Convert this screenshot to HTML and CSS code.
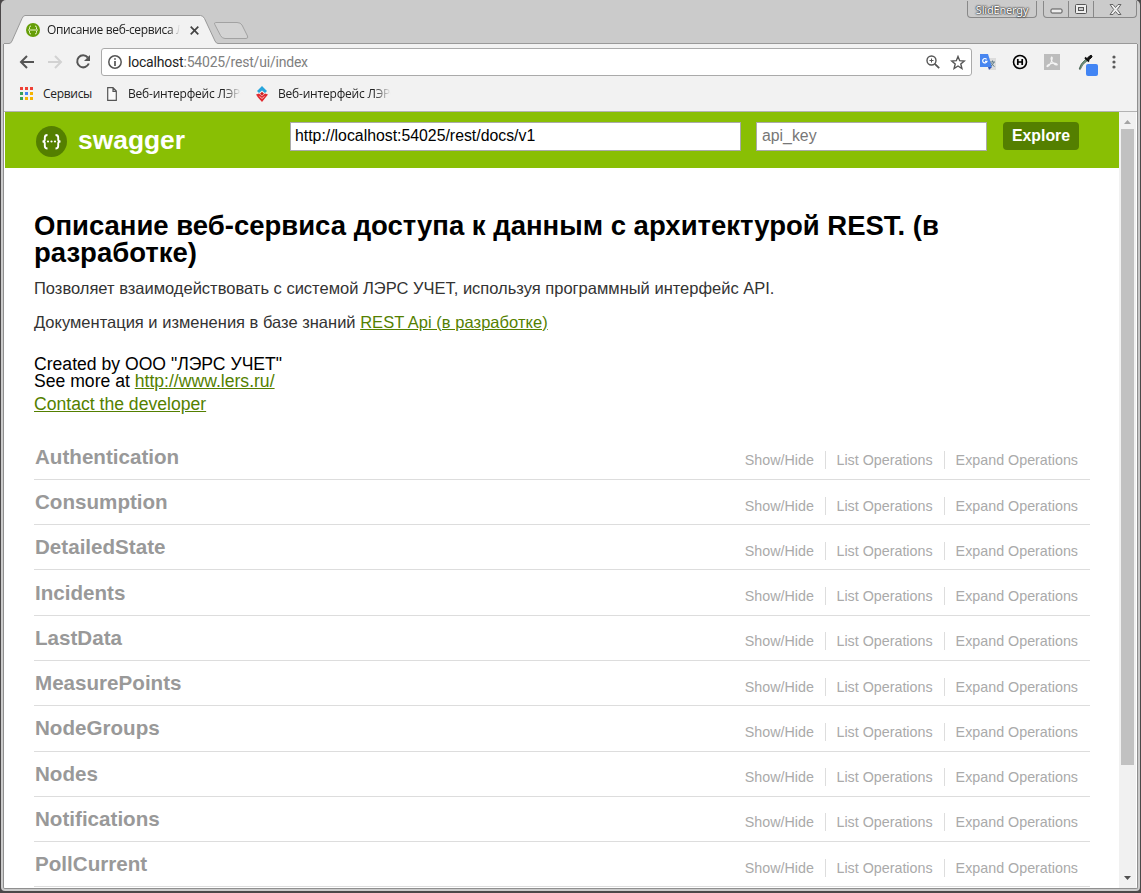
FILE: index.html
```html
<!DOCTYPE html>
<html lang="ru">
<head>
<meta charset="utf-8">
<title>Описание веб-сервиса</title>
<link rel="stylesheet" href="styles.css">
</head>
<body>
<div class="window">
  <header class="titlebar">
    <svg class="tab-shape" width="260" height="32" viewBox="0 0 260 32">
      <path d="M0 32V29.500H5Q7 29.500 8 27L18 4.500Q19.300 1.500 21 1.500H196.500Q199 1.500 200.500 4.500L211 27Q212.300 29.500 214 29.500H260V32Z" fill="#f2f2f2"/>
      <path d="M0 29.500H5Q7 29.500 8 27L18 4.500Q19.300 1.500 21 1.500H196.500Q199 1.500 200.500 4.500L211 27Q212.300 29.500 214 29.500H260" fill="none" stroke="#999"/>
      <path d="M211.500 8.500H233Q236.500 8.500 238 11L243.500 22Q244.500 24.500 242 24.500H221Q218 24.500 216.500 21.500L210.800 10.500Q210 8.500 211.500 8.500Z" fill="#d3d3d3" stroke="#a2a2a2"/>
    </svg>
    <div class="tab">
      <svg width="14" height="14" viewBox="0 0 14 14"><circle cx="7" cy="7" r="7" fill="#659e08"/><path d="M5 3Q3.500 3 3.500 4.500V6L2.500 7L3.500 8V9.500Q3.500 11 5 11M9 3Q10.500 3 10.500 4.500V6L11.500 7L10.500 8V9.500Q10.500 11 9 11M4 7H10" stroke="#e9f5c8" fill="none"/></svg>
      <span class="tab-title">Описание веб-сервиса ЛЭ</span>
      <svg width="9" height="9" viewBox="0 0 9 9"><path d="M.7.700L8.300 8.300M8.300.700L.7 8.300" stroke="#444" stroke-width="1.700"/></svg>
    </div>
    <div class="user">SlidEnergy</div>
    <div class="controls">
      <span class="control"><svg width="13" height="6"><rect x="1" y="1" width="11" height="4" rx="1" fill="#eee" stroke="#555"/></svg></span>
      <span class="control"><svg width="12" height="10"><rect x=".5" y=".5" width="11" height="9" rx="1" fill="#eee" stroke="#555"/><rect x="3.500" y="3.500" width="5" height="3" fill="#ccc" stroke="#555"/></svg></span>
      <span class="control wide"><svg width="13" height="11" viewBox="0 0 13 11"><path d="M1 .5H4L6.500 3.500L9 .5H12L8.300 5.500L12 10.500H9L6.500 7.500L4 10.500H1L4.700 5.500Z" fill="#eee" stroke="#666"/></svg></span>
    </div>
  </header>
  <div class="frame">
  <div class="toolbar">
    <svg class="nav" width="16" height="14" viewBox="0 0 16 14"><path d="M15 7H2M8 1L2 7L8 13" fill="none" stroke="#555" stroke-width="2"/></svg>
    <svg class="nav" width="16" height="14" viewBox="0 0 16 14"><path d="M1 7H14M8 1L14 7L8 13" fill="none" stroke="#d2d2d2" stroke-width="2"/></svg>
    <svg class="nav" width="16" height="16" viewBox="0 0 16 16"><path d="M12.800 3.500A6 6 0 1 0 13.800 9.500" fill="none" stroke="#555" stroke-width="2"/><path d="M15 1V7H9Z" fill="#555"/></svg>
    <div class="omnibox">
      <svg width="14" height="14" viewBox="0 0 14 14"><circle cx="7" cy="7" r="6.200" fill="none" stroke="#555" stroke-width="1.500"/><path d="M7 6V11M7 3.200V4.800" stroke="#555" stroke-width="1.700"/></svg>
      <span class="url"><b>localhost</b>:54025/rest/ui/index</span>
      <svg width="14" height="14" viewBox="0 0 14 14"><circle cx="5.500" cy="5.500" r="4.500" fill="none" stroke="#555" stroke-width="1.400"/><path d="M8.800 8.800L13.200 13.200" stroke="#555" stroke-width="1.800"/><path d="M3.500 5.500H7.500M5.500 3.500V7.500" stroke="#555"/></svg>
      <svg class="star" width="16" height="15" viewBox="0 0 16 15"><path d="M8 1.500L9.700 5.700L14.300 6L10.800 9L11.900 13.500L8 11L4.100 13.500L5.200 9L1.700 6L6.300 5.700Z" fill="none" stroke="#555" stroke-width="1.400"/></svg>
    </div>
    <div class="extensions">
      <svg width="16" height="16" viewBox="0 0 16 16"><path d="M6 4H16V16H10Z" fill="#dcdcdc"/><path d="M0 0H8L12 13H0Z" fill="#4886f0"/><path d="M8 13H12L9 16Z" fill="#3457b4"/><path d="M6.600 5.300A2.200 2.200 0 1 0 7 7.300H5" fill="none" stroke="#fff" stroke-width="1.200"/><path d="M10 8H15M12.500 6.500V8M14 8Q13 11 10.800 12M11.500 9Q12 11 14.500 12.500" stroke="#607d8b" fill="none"/></svg>
      <svg width="16" height="16" viewBox="0 0 16 16"><circle cx="8" cy="8" r="6.500" fill="none" stroke="#000" stroke-width="1.600"/><path d="M5.800 5V11M10.200 5V11M5.800 8H10.200" stroke="#000" stroke-width="1.700"/></svg>
      <svg width="16" height="16" viewBox="0 0 16 16"><path d="M0 0H16V16H0Z" fill="#bdbdbd"/><path d="M7.500 3C9 3 8 6 7 8.500C6 11 4 13 3 12.500C2.500 11 6 9.500 9 9.200C12 9 14 10 13 11C11.500 11.500 7 8 7 4.500Z" fill="none" stroke="#f4f4f4" stroke-width="1.100"/></svg>
      <svg width="21" height="22" viewBox="0 0 21 22"><path d="M1.200 15Q2 10 8 5L9.500 6.500Q4 10 2.200 15.500Z" fill="#6f9c80" stroke="#354a40" stroke-width=".7"/><path d="M7 3.500L11 7.500" stroke="#111" stroke-width="1.800"/><path d="M9 4.500L11.500 2Q13.500.5 14 2Q14.300 3 13 4L10.500 6Z" fill="#111" stroke="#111"/><rect x="8" y="10" width="12" height="12" rx="2" fill="#4285f4"/></svg>
      <svg width="4" height="14" viewBox="0 0 4 14"><g fill="#5a5a5a"><circle cx="2" cy="2" r="1.600"/><circle cx="2" cy="7" r="1.600"/><circle cx="2" cy="12" r="1.600"/></g></svg>
    </div>
  </div>
  <div class="bookmarks">
    <svg width="13" height="13" viewBox="0 0 13 13"><path d="M0 0h3v3H0zM5 0h3v3H5zM10 0h3v3h-3z" fill="#ef4136"/><path d="M0 5h3v3H0zM0 10h3v3H0z" fill="#38a05a"/><path d="M5 5h3v3H5z" fill="#4285f4"/><path d="M10 5h3v3h-3zM5 10h3v3H5zM10 10h3v3h-3z" fill="#f5b400"/></svg>
    <span class="apps">Сервисы</span>
    <svg width="10" height="14" viewBox="0 0 10 14"><path d="M.7.700H6L9.300 4V13.300H.7ZM6 .7V4.300H9.300" fill="#fafafa" stroke="#555" stroke-width="1.200"/></svg>
    <span class="bookmark">Веб-интерфейс ЛЭРС</span>
    <svg class="lers" width="12" height="16" viewBox="0 0 12 16"><path d="M6 0L11 5L9 7L6 4.500L3 7L1 5Z" fill="#27a5dc"/><path d="M0 8.500L3 7.500L6 10L9 7.500L12 8.500L10 11L6 16L2 11.500Z" fill="#e12c32"/><path d="M6 5.800L8 7.700L6 9.500L4 7.700Z" fill="#c22"/><path d="M3.500 10.500L6 12.500L8.500 10.500" stroke="#f6b5b5" fill="none"/></svg>
    <span class="bookmark">Веб-интерфейс ЛЭРС</span>
  </div>
  <div class="viewport">
    <div class="page">
      <div class="swagger-header">
        <svg class="logo" width="31" height="31" viewBox="0 0 31 31"><circle cx="15.500" cy="15.500" r="15.500" fill="#547f00"/><path d="M11.500 9Q8.800 9 8.800 11.500V13.500Q8.800 15.500 6.500 15.500Q8.800 15.500 8.800 17.500V20Q8.800 22.500 11.500 22.500M19.500 9Q22.200 9 22.200 11.500V13.500Q22.200 15.500 24.500 15.500Q22.200 15.500 22.200 17.500V20Q22.200 22.500 19.500 22.500" stroke="#fff" stroke-width="1.900" fill="none"/><g fill="#fff"><circle cx="12" cy="15.500" r="1.100"/><circle cx="15.500" cy="15.500" r="1.100"/><circle cx="19" cy="15.500" r="1.100"/></g></svg>
        <span class="brand">swagger</span>
        <div class="field field-url">http://localhost:54025/rest/docs/v1</div>
        <div class="field field-key">api_key</div>
        <div class="explore">Explore</div>
      </div>
      <main class="content">
        <h1>Описание веб-сервиса доступа к данным с архитектурой REST. (в разработке)</h1>
        <p class="description">Позволяет взаимодействовать с системой ЛЭРС УЧЕТ, используя программный интерфейс API.</p>
        <p class="description">Документация и изменения в базе знаний <a>REST Api (в разработке)</a></p>
        <div class="info">
          <div>Created by ООО "ЛЭРС УЧЕТ"</div>
          <div>See more at <a>http://www.lers.ru/</a></div>
          <div class="contact"><a>Contact the developer</a></div>
        </div>
        <ul class="resources">
          <li><h2>Authentication</h2><div class="ops"><span>Show/Hide</span><span>List Operations</span><span>Expand Operations</span></div></li>
          <li><h2>Consumption</h2><div class="ops"><span>Show/Hide</span><span>List Operations</span><span>Expand Operations</span></div></li>
          <li><h2>DetailedState</h2><div class="ops"><span>Show/Hide</span><span>List Operations</span><span>Expand Operations</span></div></li>
          <li><h2>Incidents</h2><div class="ops"><span>Show/Hide</span><span>List Operations</span><span>Expand Operations</span></div></li>
          <li><h2>LastData</h2><div class="ops"><span>Show/Hide</span><span>List Operations</span><span>Expand Operations</span></div></li>
          <li><h2>MeasurePoints</h2><div class="ops"><span>Show/Hide</span><span>List Operations</span><span>Expand Operations</span></div></li>
          <li><h2>NodeGroups</h2><div class="ops"><span>Show/Hide</span><span>List Operations</span><span>Expand Operations</span></div></li>
          <li><h2>Nodes</h2><div class="ops"><span>Show/Hide</span><span>List Operations</span><span>Expand Operations</span></div></li>
          <li><h2>Notifications</h2><div class="ops"><span>Show/Hide</span><span>List Operations</span><span>Expand Operations</span></div></li>
          <li><h2>PollCurrent</h2><div class="ops"><span>Show/Hide</span><span>List Operations</span><span>Expand Operations</span></div></li>
        </ul>
      </main>
    </div>
    <div class="scrollbar">
      <svg width="7" height="4"><path d="M0 4L3.500 0L7 4Z" fill="#a3a3a3"/></svg>
      <div class="thumb"></div>
      <svg width="7" height="4"><path d="M0 0H7L3.500 4Z" fill="#505050"/></svg>
    </div>
  </div>
  </div>
</div>
</body>
</html>
```
FILE: styles.css
```css
* { box-sizing: border-box; }
body { margin: 0; background: #4b4849; font-family: "Liberation Sans", Arial, sans-serif; }
svg { display: block; flex: none; }
.window {
  width: 1139px; height: 891px; margin: 0 0 0 1px;
  padding: 1px 2px 2px 2px; overflow: hidden;
  background: #cbcbcb; border-radius: 5px 5px 4px 4px;
  display: flex; flex-direction: column;
}
.titlebar { height: 43px; flex: none; margin: 0 1px; display: flex; align-items: flex-start; position: relative; }
.tab-shape { position: absolute; left: 0; top: 13px; }
.titlebar::after { content: ""; position: absolute; left: 259px; right: 0; bottom: 0; height: 1px; background: #999; }
.tab { position: relative; display: flex; align-items: center; width: 196px; padding-left: 22px; margin-top: 19px; height: 20px; }
.tab-title {
  font: 12px/20px "Open Sans", sans-serif; color: #222; width: 133px; margin: 0 10px 0 7px; flex: none;
  overflow: hidden; white-space: nowrap; letter-spacing: -.35px;
  mask-image: linear-gradient(90deg, #000 92%, transparent);
}
.user {
  margin-left: auto; width: 70px; height: 17px; border: 1px solid #888; border-top: 0; border-radius: 0 0 4px 4px;
  font: 11px/17px "Noto Sans", sans-serif; letter-spacing: -.2px; color: #fff; text-align: center; text-shadow: 0 0 2px #333, 0 0 2px #333, 0 0 1px #333;
}
.controls { display: flex; margin: 0 0 0 6px; height: 17px; border: 1px solid #888; border-top: 0; border-radius: 0 0 4px 4px; }
.control { width: 25px; display: flex; align-items: center; justify-content: center; border-right: 1px solid #888; }
.control:first-child { align-items: flex-end; padding-bottom: 3px; }
.wide { width: 42px; border: 0; }
.frame { flex: 1; min-height: 0; display: flex; flex-direction: column; border: 1px solid #8f8f8f; border-top: 0; overflow: hidden; border-radius: 0 0 2px 2px; }
.toolbar { height: 36px; flex: none; background: #f2f2f2; display: flex; align-items: center; padding-left: 15px; }
.nav { margin-right: 12px; }
.omnibox {
  width: 871px; height: 28px; flex: none; margin-left: -2px; border: 1px solid #aaa; border-radius: 3px; background: #fff;
  display: flex; align-items: center; padding: 0 5px 0 6px;
}
.url { font: 14px/26px Roboto, sans-serif; letter-spacing: -.2px; color: #808080; margin: 0 auto 0 6px; }
.url b { font-weight: 400; color: #222; }
.star { margin-left: 10px; }
.extensions { display: flex; align-items: center; gap: 16px; margin-left: 8px; }
.extensions svg:nth-child(4) { margin: 6px -3px 0 2px; }
.bookmarks { height: 32px; flex: none; background: #f2f2f2; border-bottom: 1px solid #b3b3b3; display: flex; align-items: center; padding: 0 0 4px 16px; font: 12px/18px "Open Sans", sans-serif; color: #222; }
.apps { width: 49px; margin: 0 15px 0 10px; letter-spacing: -.3px; }
.bookmark { width: 113px; margin-left: 11px; overflow: hidden; white-space: nowrap; letter-spacing: -.2px; mask-image: linear-gradient(90deg, #000 85%, transparent); }
.lers { margin-left: 15px; margin-right: -1px; }
.viewport { flex: 1; min-height: 0; display: flex; background: #fff; overflow: hidden; padding-left: 1px; }
.page { width: 1114px; flex: none; overflow: hidden; }
.swagger-header { height: 56px; background: #89bf04; display: flex; align-items: flex-start; padding: 10px 0 0 31px; }
.logo { margin-top: 4px; }
.brand { font-size: 26.4px; line-height: 30px; font-weight: 700; color: #fff; margin: 3px 0 0 11px; width: 212px; }
.field { height: 29px; border: 1px solid #aaa; background: #fff; font-size: 15.84px; line-height: 26px; padding-left: 5px; }
.field-url { width: 451px; padding-left: 4px; color: #000; }
.field-key { width: 231px; margin-left: 15px; color: #777; }
.explore { width: 76px; height: 28px; margin-left: 16px; border-radius: 4px; background: #547f00; color: #fff; font-size: 15.84px; font-weight: 700; line-height: 27px; text-align: center; }
.content { padding: 44px 29px 0; }
h1 { margin: 0; font-size: 27.5px; line-height: 27px; width: 960px; }
.description { margin: 0 0 9px; font-size: 16.5px; line-height: 25px; color: #333; }
h1 + .description { margin-top: 10px; }
.description a { letter-spacing: .04px; }
a { color: #547f00; text-decoration: underline; }
.info { margin-top: 21px; font-size: 17.6px; line-height: 17px; }
.contact { margin-top: 6px; }
.resources { list-style: none; margin: 21.650px 0 0; padding: 0; }
.resources li { height: 45.270px; border-bottom: 1px solid #ddd; display: flex; justify-content: space-between; }
h2 { margin: 9.150px 0 0 1px; font-size: 20.6px; line-height: 26px; color: #999; }
.ops { display: flex; margin: 16.720px 12px 0 0; height: 18px; font-size: 14.3px; line-height: 18px; color: #aaa; }
.ops span + span { border-left: 1px solid #ddd; margin-left: 11px; padding-left: 11px; }
.ops span:nth-child(2) { margin-left: 10.700px; padding-left: 10.800px; }
.scrollbar { width: 17px; background: #f1f1f1; display: flex; flex-direction: column; align-items: center; padding: 8px 0; }
.thumb { width: 13px; height: 636px; margin: 5px 0 auto; background: #c1c1c1; }
```
